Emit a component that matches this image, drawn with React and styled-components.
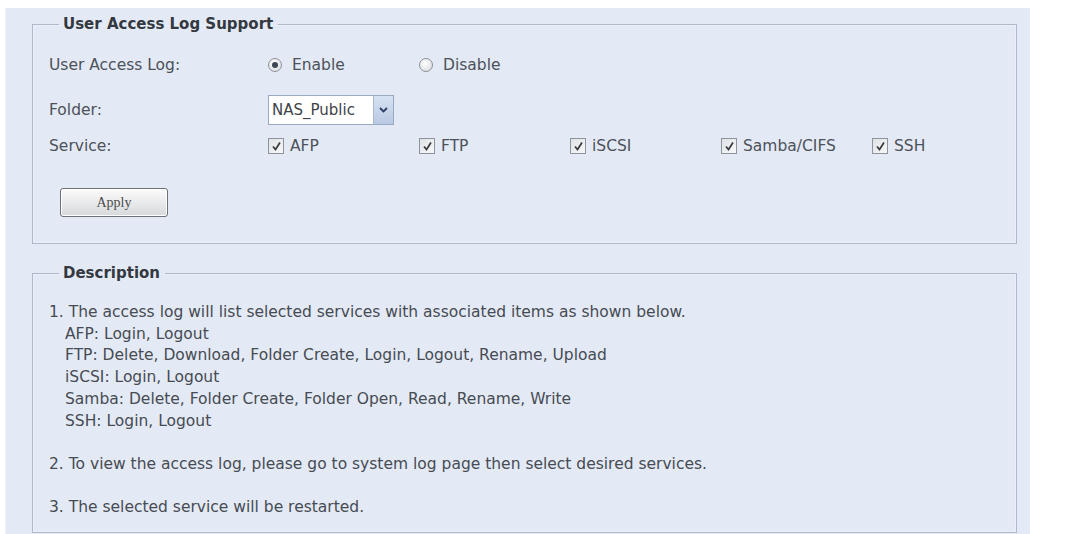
import React from "react";
import styled, { createGlobalStyle } from "styled-components";

const services = ["AFP", "FTP", "iSCSI", "Samba/CIFS", "SSH"];

const serviceItems = [
  "AFP: Login, Logout",
  "FTP: Delete, Download, Folder Create, Login, Logout, Rename, Upload",
  "iSCSI: Login, Logout",
  "Samba: Delete, Folder Create, Folder Open, Read, Rename, Write",
  "SSH: Login, Logout",
];

const App = () => {
  return (
    <Page>
      <GlobalStyle />
      <Panel>
        <Fieldset $pb={26}>
          <Legend>User Access Log Support</Legend>
          <Form>
            <Row $top={18} $h={26}>
              <Label>User Access Log:</Label>
              <Option>
                <Radio $checked />
                Enable
              </Option>
              <Option>
                <Radio />
                Disable
              </Option>
            </Row>
            <Row $top={17} $h={30}>
              <Label>Folder:</Label>
              <Select>
                <SelectValue>NAS_Public</SelectValue>
                <SelectArrow>
                  <svg width="9" height="6" viewBox="0 0 9 6">
                    <path
                      d="M1 1 L4.5 4.5 L8 1"
                      fill="none"
                      stroke="#2c3e66"
                      strokeWidth="1.8"
                    />
                  </svg>
                </SelectArrow>
              </Select>
            </Row>
            <Row $top={10} $h={22}>
              <Label>Service:</Label>
              {services.map((s) => (
                <Option key={s} $gap={6}>
                  <Checkbox>
                    <svg width="11" height="11" viewBox="0 0 11 11">
                      <path
                        d="M2 5.5 L4.5 8.5 L9 1.5"
                        fill="none"
                        stroke="#3a3a3a"
                        strokeWidth="1.7"
                      />
                    </svg>
                  </Checkbox>
                  {s}
                </Option>
              ))}
            </Row>
            <ApplyButton>Apply</ApplyButton>
          </Form>
        </Fieldset>

        <Fieldset $top={19} $pb={0} $h={270}>
          <Legend>Description</Legend>
          <Desc>
            <Para>
              1. The access log will list selected services with associated
              items as shown below.
              {serviceItems.map((t) => (
                <SubLine key={t}>{t}</SubLine>
              ))}
            </Para>
            <Para>
              2. To view the access log, please go to system log page then
              select desired services.
            </Para>
            <Para>3. The selected service will be restarted.</Para>
          </Desc>
        </Fieldset>
      </Panel>
    </Page>
  );
};

const GlobalStyle = createGlobalStyle`
  html, body {
    margin: 0;
    background: #ffffff;
  }
  body {
    font-family: "DejaVu Sans", "Liberation Sans", sans-serif;
    color: #474b52;
  }
`;

const Page = styled.div`
  height: 534px;
  box-sizing: border-box;
  padding: 8px 38px 0 5px;
  overflow: hidden;
`;

const Panel = styled.div`
  height: 100%;
  box-sizing: border-box;
  padding: 6px 13px 0 26px;
  background-color: #e3eaf6;
  border-left: 1px solid #edf1f8;
`;

const Fieldset = styled.fieldset`
  box-sizing: border-box;
  ${(p) => (p.$h ? `height: ${p.$h}px;` : "")}
  margin: ${(p) => p.$top || 0}px 0 0 0;
  padding: 0 0 ${(p) => p.$pb}px 16px;
  min-width: 0;
  border: 1px solid #aeb9cb;
  box-shadow: inset 0 0 0 1px rgba(255, 255, 255, 0.25);
`;

const Legend = styled.legend`
  margin-left: 10px;
  padding: 0 5px 0 4px;
  font-size: 15px;
  line-height: 20px;
  font-weight: bold;
  color: #34383f;
`;

const Form = styled.div`
  display: flex;
  flex-direction: column;
`;

const Row = styled.div`
  display: grid;
  grid-template-columns: 219px repeat(5, 151px);
  align-items: center;
  height: ${(p) => p.$h}px;
  margin-top: ${(p) => p.$top}px;
  font-size: 15.5px;
`;

const Label = styled.div`
  color: #4d5158;
`;

const Option = styled.div`
  display: flex;
  align-items: center;
  gap: ${(p) => p.$gap || 10}px;
  white-space: nowrap;
  color: #4d5158;
`;

const Radio = styled.span`
  position: relative;
  width: 12px;
  height: 12px;
  border-radius: 50%;
  border: 1px solid #8c9098;
  background: radial-gradient(circle at 40% 35%, #ffffff, #d4d7dc);

  &::after {
    content: "";
    display: ${(p) => (p.$checked ? "block" : "none")};
    position: absolute;
    left: 3px;
    top: 3px;
    width: 6px;
    height: 6px;
    border-radius: 50%;
    background: #3d4655;
  }
`;

const Checkbox = styled.span`
  display: flex;
  align-items: center;
  justify-content: center;
  width: 14px;
  height: 14px;
  border: 1px solid #8f939a;
  background: linear-gradient(135deg, #dfe2e6, #f7f8f9);
`;

const Select = styled.div`
  display: flex;
  width: 126px;
  height: 30px;
  box-sizing: border-box;
  border: 1px solid #9aa9c0;
  background: #ffffff;
`;

const SelectValue = styled.div`
  flex: 1;
  display: flex;
  align-items: center;
  padding-left: 3px;
  font-size: 15px;
  color: #3e4249;
  white-space: nowrap;
  overflow: hidden;
`;

const SelectArrow = styled.div`
  width: 19px;
  flex: none;
  display: flex;
  align-items: center;
  justify-content: center;
  background: linear-gradient(#d7e2f3, #b9c9e2);
  border-left: 1px solid #a9b8cf;
`;

const ApplyButton = styled.button`
  align-self: flex-start;
  margin: 31px 0 0 11px;
  width: 108px;
  height: 29px;
  border: 1px solid #6e7075;
  border-radius: 3px;
  background: linear-gradient(#fbfbfb, #e6e7e9 60%, #d6d8db);
  box-shadow: inset 0 0 0 1px #ffffff;
  font-family: "Liberation Serif", serif;
  font-size: 14px;
  color: #4b4b4b;
  cursor: pointer;
`;

const Desc = styled.div`
  padding-top: 19px;
  font-size: 15.5px;
  line-height: 21.7px;
  color: #474b52;
`;

const Para = styled.div`
  margin-bottom: 21.7px;
`;

const SubLine = styled.div`
  padding-left: 16px;
`;

export default App;
